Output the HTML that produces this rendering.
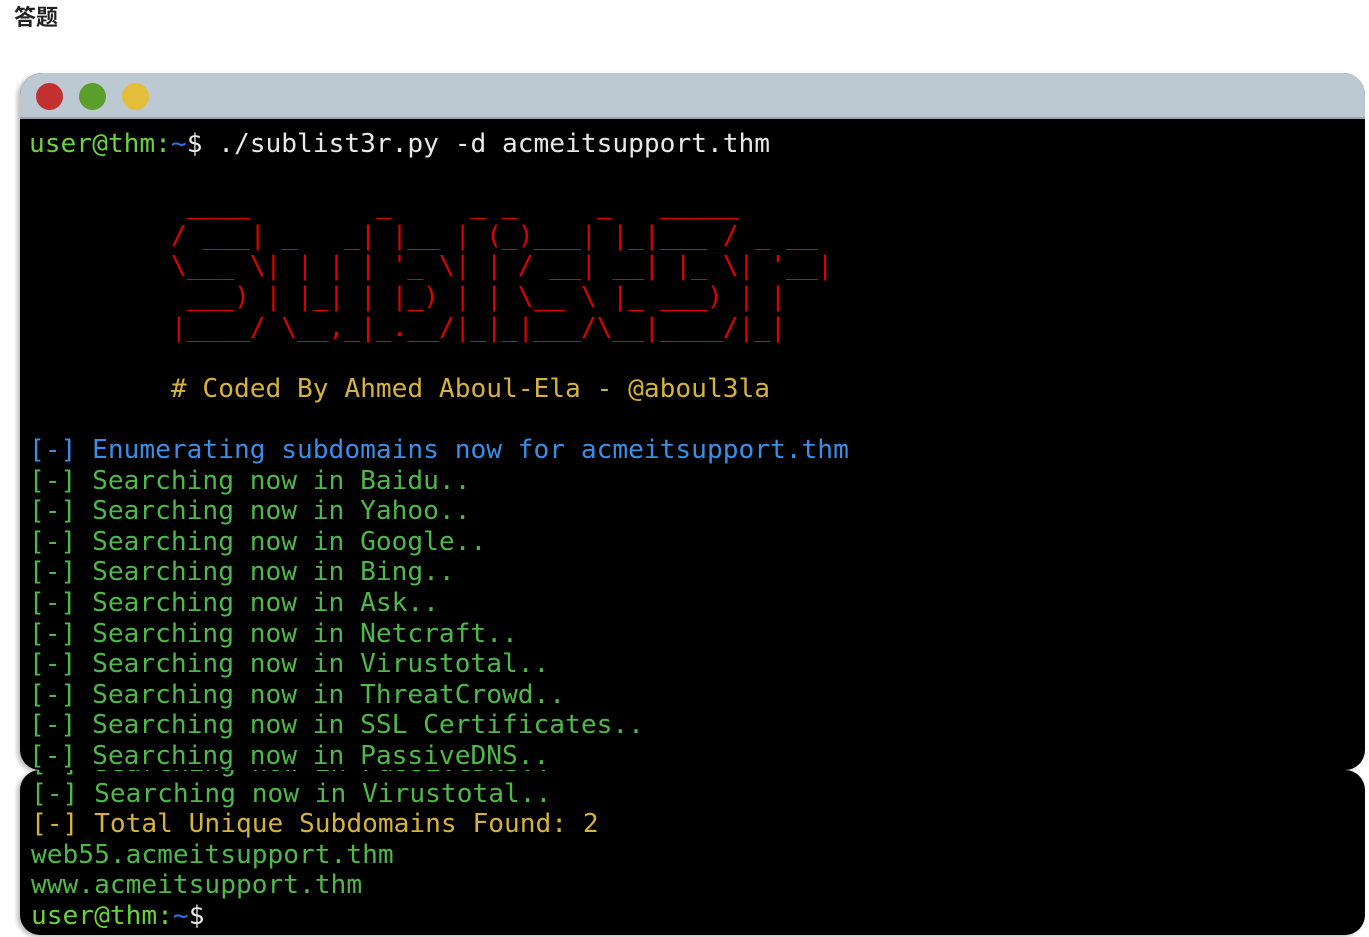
<!DOCTYPE html>
<html><head><meta charset="utf-8"><style>
*{margin:0;padding:0;box-sizing:border-box}
body{width:1369px;height:937px;background:#fff;position:relative;overflow:hidden;font-family:"Liberation Sans","Noto Sans CJK SC",sans-serif}
h1{position:absolute;left:14px;top:4px;font-size:22px;font-weight:bold;color:#222;line-height:28px}
.win{position:absolute;left:20px;top:73px;width:1345px;height:697px;background:#000;border-radius:22px 22px 20px 20px;overflow:hidden;box-shadow:-3px 2px 4px rgba(0,0,0,.25)}
.bar{height:46px;background:#bcc8d2;border-bottom:2px solid #98a4ae;position:relative}
.dot{position:absolute;top:10px;width:27px;height:27px;border-radius:50%}
pre{font-family:"DejaVu Sans Mono",monospace;font-size:26.2px;line-height:30.6px;color:#4fb84a;position:absolute;left:9px;white-space:pre}
.g{color:#6ad23c}.b{color:#2f6fe0}.w{color:#e8e8e8}.r{color:#e00000}.y{color:#d6b23a}.bl{color:#3a8ee6}
.win2{position:absolute;left:20px;top:770px;width:1345px;height:165px;background:#000;border-radius:20px;overflow:hidden;box-shadow:-3px 2px 4px rgba(0,0,0,.25)}
</style></head><body>
<h1>答题</h1>
<div class="win">
<div class="bar">
<div class="dot" style="left:16px;background:#c23030"></div>
<div class="dot" style="left:59px;background:#5a9e2c"></div>
<div class="dot" style="left:102px;background:#e4be3a"></div>
</div>
<pre style="top:56px"><span class="g">user@thm:</span><span class="b">~</span><span class="w">$ ./sublist3r.py -d acmeitsupport.thm</span>

<span class="r">          ____        _     _ _     _   _____
         / ___| _   _| |__ | (_)___| |_|___ / _ __
         \___ \| | | | '_ \| | / __| __| |_ \| '__|
          ___) | |_| | |_) | | \__ \ |_ ___) | |
         |____/ \__,_|_.__/|_|_|___/\__|____/|_|</span>

<span class="y">         # Coded By Ahmed Aboul-Ela - @aboul3la</span>

<span class="bl">[-] Enumerating subdomains now for acmeitsupport.thm</span>
[-] Searching now in Baidu..
[-] Searching now in Yahoo..
[-] Searching now in Google..
[-] Searching now in Bing..
[-] Searching now in Ask..
[-] Searching now in Netcraft..
[-] Searching now in Virustotal..
[-] Searching now in ThreatCrowd..
[-] Searching now in SSL Certificates..
[-] Searching now in PassiveDNS..</pre>
</div>
<div class="win2">
<pre style="left:11px;top:-22px">[-] Searching now in PassiveDNS..
[-] Searching now in Virustotal..
<span class="y">[-] Total Unique Subdomains Found: 2</span>
web55.acmeitsupport.thm
www.acmeitsupport.thm
<span class="g">user@thm:</span><span class="b">~</span><span class="w">$</span></pre>
</div>
</body></html>
